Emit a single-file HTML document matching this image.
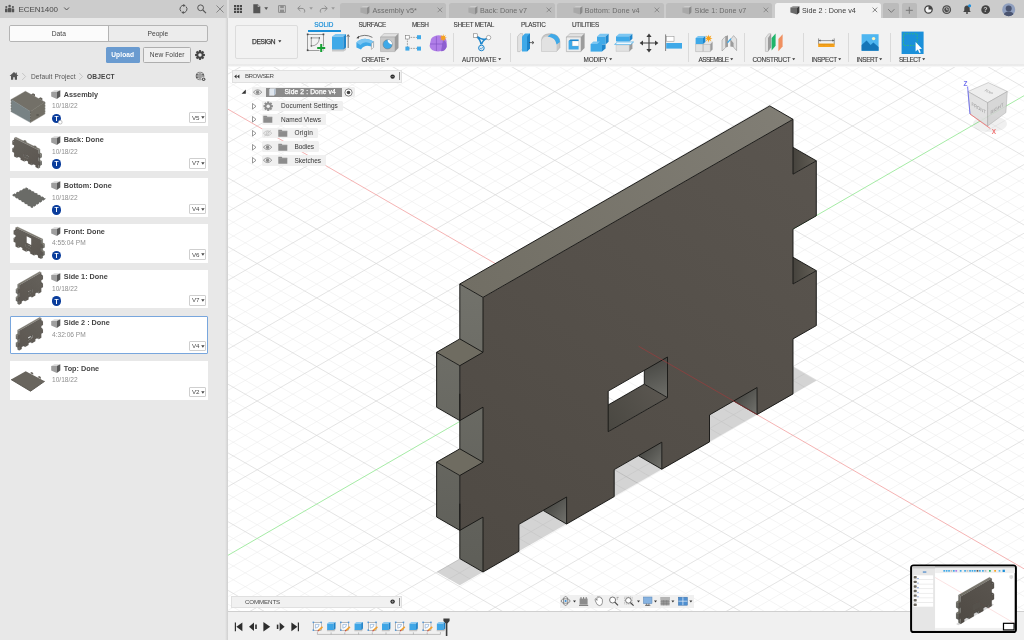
<!DOCTYPE html>
<html lang="en"><head><meta charset="utf-8"><title>Autodesk Fusion 360 - Side 2 : Done v4</title>
<style>
html,body{margin:0;padding:0;}
body{width:1024px;height:640px;overflow:hidden;position:relative;background:#fff;font-family:"Liberation Sans",sans-serif;}
.a{position:absolute;box-sizing:border-box;display:block;}
.t{position:absolute;white-space:nowrap;display:block;}
svg{overflow:visible;}
#app{position:absolute;left:0;top:0;width:1024px;height:640px;overflow:hidden;will-change:transform;}
</style></head><body><div id="app">
<svg class="a" style="left:0;top:0" width="1024" height="640" viewBox="0 0 1024 640"><defs><linearGradient id="gFront" gradientUnits="userSpaceOnUse" x1="480" y1="560" x2="800" y2="130"><stop offset="0" stop-color="#4f4a44"/><stop offset="1" stop-color="#5a554f"/></linearGradient><linearGradient id="gTop" gradientUnits="userSpaceOnUse" x1="460" y1="290" x2="790" y2="110"><stop offset="0" stop-color="#716e64"/><stop offset="1" stop-color="#817e75"/></linearGradient><linearGradient id="gEnd" gradientUnits="userSpaceOnUse" x1="0" y1="285" x2="0" y2="572"><stop offset="0" stop-color="#72726b"/><stop offset="1" stop-color="#5e5e58"/></linearGradient><linearGradient id="gWall" x1="0.45" y1="0.25" x2="0.95" y2="1"><stop offset="0" stop-color="#454541"/><stop offset="1" stop-color="#72726d"/></linearGradient><linearGradient id="gRTab" gradientUnits="userSpaceOnUse" x1="793" y1="0" x2="816" y2="0"><stop offset="0" stop-color="#46433d"/><stop offset="1" stop-color="#625e56"/></linearGradient><clipPath id="cv"><rect x="228" y="60" width="796" height="554"/></clipPath></defs><defs><linearGradient id="gHoleW" gradientUnits="userSpaceOnUse" x1="650" y1="362" x2="664" y2="396"><stop offset="0" stop-color="#484844"/><stop offset="1" stop-color="#6c6c67"/></linearGradient><linearGradient id="gHoleB" gradientUnits="userSpaceOnUse" x1="608" y1="425" x2="660" y2="392"><stop offset="0" stop-color="#4a4842"/><stop offset="1" stop-color="#5a5650"/></linearGradient></defs><g clip-path="url(#cv)"><rect x="228" y="60" width="796" height="554" fill="#fff"/><path d="M228.0 60.3L228.5 60.0M228.0 87.8L276.2 60.0M228.0 101.6L300.0 60.0M228.0 115.3L323.8 60.0M228.0 129.1L347.6 60.0M228.0 156.6L395.3 60.0M228.0 170.3L419.1 60.0M228.0 184.1L442.9 60.0M228.0 197.8L466.7 60.0M228.0 225.3L514.3 60.0M228.0 239.1L538.1 60.0M228.0 252.8L562.0 60.0M228.0 266.6L585.8 60.0M228.0 294.1L633.4 60.0M228.0 307.8L657.2 60.0M228.0 321.6L681.0 60.0M228.0 335.3L704.9 60.0M228.0 362.8L752.5 60.0M228.0 376.6L776.3 60.0M228.0 390.3L800.1 60.0M228.0 404.1L823.9 60.0M228.0 431.6L871.6 60.0M228.0 445.3L895.4 60.0M228.0 459.1L919.2 60.0M228.0 472.8L943.0 60.0M228.0 500.3L990.6 60.0M228.0 514.1L1014.5 60.0M228.0 527.8L1024.0 68.2M228.0 541.6L1024.0 82.0M228.0 569.1L1024.0 109.5M228.0 582.8L1024.0 123.2M228.0 596.6L1024.0 137.0M228.0 610.3L1024.0 150.7M269.2 614.0L1024.0 178.2M293.1 614.0L1024.0 192.0M316.9 614.0L1024.0 205.7M340.7 614.0L1024.0 219.5M388.3 614.0L1024.0 247.0M412.1 614.0L1024.0 260.7M436.0 614.0L1024.0 274.5M459.8 614.0L1024.0 288.2M507.4 614.0L1024.0 315.7M531.2 614.0L1024.0 329.5M555.0 614.0L1024.0 343.2M578.8 614.0L1024.0 357.0M626.5 614.0L1024.0 384.5M650.3 614.0L1024.0 398.2M674.1 614.0L1024.0 412.0M697.9 614.0L1024.0 425.7M745.6 614.0L1024.0 453.2M769.4 614.0L1024.0 467.0M793.2 614.0L1024.0 480.7M817.0 614.0L1024.0 494.5M864.6 614.0L1024.0 522.0M888.5 614.0L1024.0 535.7M912.3 614.0L1024.0 549.5M936.1 614.0L1024.0 563.2M983.7 614.0L1024.0 590.7M1007.5 614.0L1024.0 604.5M1024.0 60.0L1024.0 60.0M1000.2 60.0L1024.0 73.8M952.5 60.0L1024.0 101.3M928.7 60.0L1024.0 115.0M904.9 60.0L1024.0 128.8M881.1 60.0L1024.0 142.5M833.5 60.0L1024.0 170.0M809.6 60.0L1024.0 183.8M785.8 60.0L1024.0 197.5M762.0 60.0L1024.0 211.3M714.4 60.0L1024.0 238.8M690.6 60.0L1024.0 252.5M666.7 60.0L1024.0 266.3M642.9 60.0L1024.0 280.0M595.3 60.0L1024.0 307.5M571.5 60.0L1024.0 321.3M547.7 60.0L1024.0 335.0M523.9 60.0L1024.0 348.8M476.2 60.0L1024.0 376.3M452.4 60.0L1024.0 390.0M428.6 60.0L1024.0 403.8M404.8 60.0L1024.0 417.5M357.1 60.0L1024.0 445.0M333.3 60.0L1024.0 458.8M309.5 60.0L1024.0 472.5M285.7 60.0L1024.0 486.3M238.1 60.0L1024.0 513.8M228.0 67.9L1024.0 527.5M228.0 81.7L1024.0 541.3M228.0 95.4L1024.0 555.0M228.0 122.9L1024.0 582.5M228.0 136.7L1024.0 596.3M228.0 150.4L1024.0 610.0M228.0 164.2L1007.1 614.0M228.0 191.7L959.5 614.0M228.0 205.4L935.6 614.0M228.0 219.2L911.8 614.0M228.0 232.9L888.0 614.0M228.0 260.4L840.4 614.0M228.0 274.2L816.6 614.0M228.0 287.9L792.8 614.0M228.0 301.7L768.9 614.0M228.0 329.2L721.3 614.0M228.0 342.9L697.5 614.0M228.0 356.7L673.7 614.0M228.0 370.4L649.9 614.0M228.0 397.9L602.2 614.0M228.0 411.7L578.4 614.0M228.0 425.4L554.6 614.0M228.0 439.2L530.8 614.0M228.0 466.7L483.1 614.0M228.0 480.4L459.3 614.0M228.0 494.2L435.5 614.0M228.0 507.9L411.7 614.0M228.0 535.4L364.1 614.0M228.0 549.2L340.3 614.0M228.0 562.9L316.4 614.0M228.0 576.7L292.6 614.0M228.0 604.2L245.0 614.0" stroke="#ebebeb" stroke-width="0.55" fill="none"/><path d="M228.0 74.1L252.4 60.0M228.0 142.8L371.4 60.0M228.0 211.6L490.5 60.0M228.0 280.3L609.6 60.0M228.0 349.1L728.7 60.0M228.0 417.8L847.8 60.0M228.0 486.6L966.8 60.0M245.4 614.0L1024.0 164.5M364.5 614.0L1024.0 233.2M483.6 614.0L1024.0 302.0M602.7 614.0L1024.0 370.7M721.7 614.0L1024.0 439.5M840.8 614.0L1024.0 508.2M959.9 614.0L1024.0 577.0M976.3 60.0L1024.0 87.5M857.3 60.0L1024.0 156.3M738.2 60.0L1024.0 225.0M619.1 60.0L1024.0 293.8M500.0 60.0L1024.0 362.5M381.0 60.0L1024.0 431.3M261.9 60.0L1024.0 500.0M228.0 177.9L983.3 614.0M228.0 246.7L864.2 614.0M228.0 315.4L745.1 614.0M228.0 384.2L626.0 614.0M228.0 452.9L507.0 614.0M228.0 521.7L387.9 614.0M228.0 590.4L268.8 614.0" stroke="#d5d5d5" stroke-width="0.65" fill="none"/><path d="M228.0 555.3L1024.0 95.7" stroke="#8ee68e" stroke-width="0.8" fill="none"/><path d="M228.0 109.2L1024.0 568.8" stroke="#f2a0a0" stroke-width="0.8" fill="none"/><g id="model"><polygon points="436.6,571.9 793.0,367.1 816.3,380.5 459.8,585.3" fill="#000" fill-opacity="0.17"/><g id="body"><polygon points="644.3,384.2 667.5,397.6 667.5,357.0 644.3,343.6" fill="url(#gHoleW)"/><polygon points="584.9,418.3 644.3,384.2 667.5,397.6 608.2,431.7" fill="url(#gHoleB)"/><polygon points="459.8,284.0 769.8,105.9 793.0,119.3 483.0,297.4" fill="url(#gTop)"/><polygon points="459.8,558.6 483.0,572.0 483.0,297.4 459.8,284.0" fill="url(#gEnd)"/><polygon points="436.6,352.3 459.8,338.9 483.0,352.3 459.8,365.7" fill="#6f6c61"/><polygon points="436.6,407.2 459.8,420.6 459.8,365.7 436.6,352.3" fill="url(#gEnd)"/><polygon points="436.6,462.1 459.8,448.8 483.0,462.2 459.8,475.5" fill="#6f6c61"/><polygon points="436.6,517.0 459.8,530.4 459.8,475.5 436.6,462.1" fill="url(#gEnd)"/><polygon points="769.8,160.8 793.0,147.4 816.3,160.8 793.0,174.2" fill="url(#gRTab)"/><polygon points="769.8,270.6 793.0,257.3 816.3,270.7 793.0,284.0" fill="url(#gRTab)"/><polygon points="543.4,510.6 566.6,524.0 566.6,497.0 543.4,483.6" fill="url(#gWall)"/><polygon points="638.6,455.8 661.8,469.2 661.8,442.2 638.6,428.8" fill="url(#gWall)"/><polygon points="733.9,401.1 757.1,414.5 757.1,387.5 733.9,374.1" fill="url(#gWall)"/><path d="M483.0 297.4L793.0 119.3L793.0 174.2L816.3 160.8L816.3 215.8L793.0 229.1L793.0 284.0L816.3 270.7L816.3 325.6L793.0 338.9L793.0 393.9L757.1 414.5L757.1 387.5L709.5 414.9L709.5 441.9L661.8 469.2L661.8 442.2L614.2 469.6L614.2 496.6L566.6 524.0L566.6 497.0L518.9 524.3L518.9 551.3L483.0 572.0L483.0 517.1L459.8 530.4L459.8 475.5L483.0 462.2L483.0 407.2L459.8 420.6L459.8 365.7L483.0 352.3ZM608.2 431.7L608.2 391.1L667.5 357.0L667.5 397.6Z" fill="url(#gFront)" fill-rule="evenodd"/><path d="M483.0 297.4L793.0 119.3L793.0 174.2L816.3 160.8L816.3 215.8L793.0 229.1L793.0 284.0L816.3 270.7L816.3 325.6L793.0 338.9L793.0 393.9L757.1 414.5L757.1 387.5L709.5 414.9L709.5 441.9L661.8 469.2L661.8 442.2L614.2 469.6L614.2 496.6L566.6 524.0L566.6 497.0L518.9 524.3L518.9 551.3L483.0 572.0L483.0 517.1L459.8 530.4L459.8 475.5L483.0 462.2L483.0 407.2L459.8 420.6L459.8 365.7L483.0 352.3ZM608.2 431.7L608.2 391.1L667.5 357.0L667.5 397.6ZM483.0 297.4L459.8 284.0L769.8 105.9L793.0 119.3M459.8 284.0L459.8 338.9M459.8 393.8L459.8 448.8M459.8 503.7L459.8 558.6L483.0 572.0M483.0 352.3L459.8 338.9L436.6 352.3L459.8 365.7M436.6 352.3L436.6 407.2L459.8 420.6M459.8 393.8L459.8 393.8M483.0 462.2L459.8 448.8L436.6 462.1L459.8 475.5M436.6 462.1L436.6 517.0L459.8 530.4M459.8 503.7L459.8 503.7M793.0 147.4L793.0 147.4L816.3 160.8M793.0 257.2L793.0 257.3L816.3 270.7M543.4 510.6L566.6 524.0M638.6 455.8L661.8 469.2M733.9 401.1L757.1 414.5M608.2 405.0L644.3 384.2L667.5 397.6M644.3 384.2L644.3 370.3" stroke="#171715" stroke-width="0.95" fill="none" stroke-linejoin="round"/></g><path d="M638.6 346.25L757.1 414.5" stroke="#a8383a" stroke-width="0.7" fill="none" opacity="0.85"/></g></g></svg>
<div class="a" style="left:0px;top:0px;width:228px;height:640px;background:linear-gradient(90deg,#e8e8e8 0,#e8e8e8 225px,#cfcfcf 228px);"></div>
<div class="a" style="left:0px;top:0px;width:228px;height:18px;background:linear-gradient(90deg,#cccccc 0,#cccccc 226.6px,#dedede 227.2px,#dedede 228px);"></div>
<svg class="a" style="left:4px;top:4px" width="12" height="10" viewBox="0 0 12 10"><g fill="#555"><circle cx="2.3" cy="3" r="1.1"/><rect x="1" y="4.6" width="2.6" height="3.6" rx=".5"/><circle cx="5.6" cy="2" r="1.3"/><rect x="4" y="3.8" width="3.2" height="4.4" rx=".5"/><circle cx="8.9" cy="3" r="1.1"/><rect x="7.6" y="4.6" width="2.6" height="3.6" rx=".5"/></g></svg>
<span class="t " style="left:18.50px;top:5px;font-size:8px;line-height:9px;height:9px;color:#4a4a4a;letter-spacing:-0.066px;">ECEN1400</span>
<svg class="a" style="left:63px;top:6px" width="8" height="6" viewBox="0 0 8 6"><path d="M1.2 1.5L3.6 4L6 1.5" stroke="#555" stroke-width="1" fill="none"/></svg>
<svg class="a" style="left:178px;top:3px" width="12" height="12" viewBox="0 0 12 12"><g stroke="#555" stroke-width="1" fill="none"><path d="M3 8.4A3.6 3.6 0 0 1 6.4 2.4"/><path d="M8 3.6A3.6 3.6 0 0 1 4.6 9.6"/></g><path d="M5.2 0.9L7.7 2.5L5.4 4.1Z" fill="#555"/><path d="M5.8 11.1L3.3 9.5L5.6 7.9Z" fill="#555"/></svg>
<svg class="a" style="left:196px;top:3px" width="12" height="12" viewBox="0 0 12 12"><circle cx="4.6" cy="4.8" r="2.9" stroke="#555" stroke-width="1" fill="none"/><path d="M6.8 7L10 10.2" stroke="#555" stroke-width="1.1"/></svg>
<svg class="a" style="left:215px;top:4px" width="10" height="10" viewBox="0 0 10 10"><path d="M1.5 1.5L8.5 8.5M8.5 1.5L1.5 8.5" stroke="#666" stroke-width="0.7"/></svg>
<div class="a" style="left:9px;top:25px;width:199px;height:16.5px;border:1px solid #b4b4b4;border-radius:2px;background:#ececec;"></div>
<div class="a" style="left:10px;top:26px;width:98.5px;height:14.5px;background:#fbfbfb;border-right:1px solid #b4b4b4;border-radius:1px 0 0 1px;"></div>
<span class="t " style="left:51.72px;top:30px;font-size:6.7px;line-height:7px;height:7px;color:#444;">Data</span>
<span class="t " style="left:147.47px;top:30px;font-size:6.7px;line-height:7px;height:7px;color:#444;">People</span>
<div class="a" style="left:105.5px;top:47px;width:34.5px;height:15.5px;background:#6a9bd0;border-radius:1.5px;"></div>
<span class="t " style="left:111.20px;top:51px;font-size:6.6px;line-height:7px;height:7px;color:#fff;font-weight:bold;letter-spacing:0.106px;">Upload</span>
<div class="a" style="left:143px;top:47px;width:47.5px;height:15.5px;background:#efefef;border:1px solid #aeaeae;border-radius:1.5px;"></div>
<span class="t " style="left:149.80px;top:51px;font-size:6.6px;line-height:7px;height:7px;color:#444;letter-spacing:0.105px;">New Folder</span>
<svg class="a" style="left:194px;top:49px" width="12" height="12" viewBox="0 0 12 12"><g transform="translate(6,6)" fill="#444"><rect x="-1.08" y="-4.90" width="2.16" height="2.45" transform="rotate(0.0)"/><rect x="-1.08" y="-4.90" width="2.16" height="2.45" transform="rotate(45.0)"/><rect x="-1.08" y="-4.90" width="2.16" height="2.45" transform="rotate(90.0)"/><rect x="-1.08" y="-4.90" width="2.16" height="2.45" transform="rotate(135.0)"/><rect x="-1.08" y="-4.90" width="2.16" height="2.45" transform="rotate(180.0)"/><rect x="-1.08" y="-4.90" width="2.16" height="2.45" transform="rotate(225.0)"/><rect x="-1.08" y="-4.90" width="2.16" height="2.45" transform="rotate(270.0)"/><rect x="-1.08" y="-4.90" width="2.16" height="2.45" transform="rotate(315.0)"/><circle r="3.63"/><circle r="1.76" fill="#e8e8e8"/></g></svg>
<svg class="a" style="left:9px;top:71px" width="10" height="10" viewBox="0 0 10 10"><path d="M5 1L0.6 5H2V8.8H4.2V6.2H5.8V8.8H8V5H9.4Z" fill="#555"/><rect x="6.8" y="1.6" width="1" height="2" fill="#555"/></svg>
<svg class="a" style="left:21px;top:72px" width="6" height="9" viewBox="0 0 6 9"><path d="M1.2 1L4.6 4.5L1.2 8" stroke="#bdbdbd" stroke-width="0.8" fill="none"/></svg>
<span class="t " style="left:31.00px;top:73px;font-size:6.6px;line-height:7px;height:7px;color:#555;letter-spacing:0.087px;">Default Project</span>
<svg class="a" style="left:78px;top:72px" width="6" height="9" viewBox="0 0 6 9"><path d="M1.2 1L4.6 4.5L1.2 8" stroke="#bdbdbd" stroke-width="0.8" fill="none"/></svg>
<span class="t " style="left:87.00px;top:73px;font-size:6.6px;line-height:7px;height:7px;color:#444;font-weight:bold;letter-spacing:0.171px;">OBJECT</span>
<svg class="a" style="left:194.5px;top:71px" width="12" height="11" viewBox="0 0 12 11"><circle cx="5" cy="5" r="4.3" fill="#555"/><path d="M0.7 5H9.3M5 0.7V9.3M2 2.2Q5 4 8 2.2M2 7.8Q5 6 8 7.8" stroke="#e8e8e8" stroke-width="0.6" fill="none"/><ellipse cx="5" cy="5" rx="2" ry="4.3" stroke="#e8e8e8" stroke-width="0.6" fill="none"/><circle cx="8.6" cy="8.2" r="2.4" fill="#e8e8e8"/><circle cx="8.6" cy="8.2" r="1.8" fill="#555"/><circle cx="8.6" cy="8.2" r="0.7" fill="#e8e8e8"/></svg>
<div class="a" style="left:10px;top:87.0px;width:198.2px;height:38.6px;background:#fff;"></div>
<svg class="a" style="left:0;top:0.00px;opacity:0.93" width="60" height="400" viewBox="0 0 60 400"><polygon points="11.2,99.4 25.4,91.3 44.8,102 30.5,111.4" fill="#69665d" stroke="#69665d" stroke-width="0.4"/><polygon points="11.2,99.4 30.5,111.4 30.5,122.6 11.2,111.8" fill="#6e797b" stroke="#6e797b" stroke-width="0.4"/><polygon points="30.5,111.4 44.8,102 44.8,114 30.5,122.6" fill="#68655b" stroke="#68655b" stroke-width="0.4"/><polygon points="31,94.4 33,93.2 35,94.2 35,96.4" fill="#5d5a52"/><polygon points="38.5,98.4 40.4,97.3 42.4,98.3 42.4,100.5" fill="#5d5a52"/><path d="M30.5 111.4V122.6" stroke="#4e4b44" stroke-width="0.7" stroke-dasharray="1.6 1.2"/><path d="M11.2 99.6V111.6M44.8 102.2V113.8" stroke="#55524a" stroke-width="0.7" stroke-dasharray="1.6 1.2"/><rect x="36.4" y="114.2" width="2.4" height="1.6" fill="#4e4b44"/></svg>
<svg class="a" style="left:51.1px;top:89.9px" width="10" height="10" viewBox="0 0 10 10"><path d="M0.2 1.9L3.4 0.2H9.3L5.8 2.1Z" fill="#d8d8d8"/><path d="M0.2 1.9L5.8 2.1V8.9L0.2 6.6Z" fill="#9e9e9e"/><path d="M5.8 2.1L9.3 0.2V6.4L5.8 8.9Z" fill="#585858"/></svg>
<span class="t " style="left:63.80px;top:90px;font-size:7.25px;line-height:9px;height:9px;color:#444;font-weight:bold;">Assembly</span>
<span class="t " style="left:52.00px;top:102px;font-size:6.6px;line-height:7px;height:7px;color:#8f8f8f;">10/18/22</span>
<div class="a" style="left:51.6px;top:113.5px;width:9.6px;height:9.6px;background:#0a3d9c;border-radius:50%;"></div>
<span class="t " style="left:54.38px;top:115px;font-size:6.6px;line-height:7px;height:7px;color:#fff;font-weight:bold;">T</span>
<div class="a" style="left:189.3px;top:112.2px;width:16.3px;height:10.6px;background:#fff;border:1px solid #cfcfcf;border-radius:1px;"></div>
<span class="t " style="left:192.00px;top:114px;font-size:6.2px;line-height:7px;height:7px;color:#4a4a4a;letter-spacing:-0.092px;">V5</span>
<svg class="a" style="left:200.6px;top:116.2px" width="4" height="3" viewBox="0 0 4 3"><path d="M0.2 0.3H3.6L1.9 2.7Z" fill="#444"/></svg>
<div class="a" style="left:10px;top:132.72px;width:198.2px;height:38.6px;background:#fff;"></div>
<svg class="a" style="left:0;top:0.02px;opacity:0.93" width="60" height="400" viewBox="0 0 60 400"><g transform="translate(27.10,153.20) scale(-0.078,0.0675) translate(-626.4,-345.6)"><use href="#body"/><polygon points="606,392 669,355 669,399 606,434" fill="#55514b"/></g><polygon points="22.6,141.2 24.8,140 26.4,140.9 26.4,143.3" fill="#66635b"/><polygon points="32.6,146.6 34.8,145.4 36.4,146.3 36.4,148.7" fill="#66635b"/></svg>
<svg class="a" style="left:51.1px;top:135.62px" width="10" height="10" viewBox="0 0 10 10"><path d="M0.2 1.9L3.4 0.2H9.3L5.8 2.1Z" fill="#d8d8d8"/><path d="M0.2 1.9L5.8 2.1V8.9L0.2 6.6Z" fill="#9e9e9e"/><path d="M5.8 2.1L9.3 0.2V6.4L5.8 8.9Z" fill="#585858"/></svg>
<span class="t " style="left:63.80px;top:135px;font-size:7.25px;line-height:9px;height:9px;color:#444;font-weight:bold;">Back: Done</span>
<span class="t " style="left:52.00px;top:148px;font-size:6.6px;line-height:7px;height:7px;color:#8f8f8f;">10/18/22</span>
<div class="a" style="left:51.6px;top:159.22px;width:9.6px;height:9.6px;background:#0a3d9c;border-radius:50%;"></div>
<span class="t " style="left:54.38px;top:160px;font-size:6.6px;line-height:7px;height:7px;color:#fff;font-weight:bold;">T</span>
<div class="a" style="left:189.3px;top:157.92px;width:16.3px;height:10.6px;background:#fff;border:1px solid #cfcfcf;border-radius:1px;"></div>
<span class="t " style="left:192.00px;top:159px;font-size:6.2px;line-height:7px;height:7px;color:#4a4a4a;letter-spacing:-0.092px;">V7</span>
<svg class="a" style="left:200.6px;top:161.92px" width="4" height="3" viewBox="0 0 4 3"><path d="M0.2 0.3H3.6L1.9 2.7Z" fill="#444"/></svg>
<div class="a" style="left:10px;top:178.44px;width:198.2px;height:38.6px;background:#fff;"></div>
<svg class="a" style="left:0;top:0.04px;opacity:0.93" width="60" height="400" viewBox="0 0 60 400"><polygon points="13.2,195.2 26,188.2 44.7,198.7 32,207.2" fill="#5f605c" stroke="#5f605c" stroke-width="1.6" stroke-linejoin="round" stroke-dasharray="2.4 1.2"/><polygon points="13.2,195.2 26,188.2 44.7,198.7 32,207.2" fill="#5f605c"/></svg>
<svg class="a" style="left:51.1px;top:181.34px" width="10" height="10" viewBox="0 0 10 10"><path d="M0.2 1.9L3.4 0.2H9.3L5.8 2.1Z" fill="#d8d8d8"/><path d="M0.2 1.9L5.8 2.1V8.9L0.2 6.6Z" fill="#9e9e9e"/><path d="M5.8 2.1L9.3 0.2V6.4L5.8 8.9Z" fill="#585858"/></svg>
<span class="t " style="left:63.80px;top:181px;font-size:7.25px;line-height:9px;height:9px;color:#444;font-weight:bold;">Bottom: Done</span>
<span class="t " style="left:52.00px;top:194px;font-size:6.6px;line-height:7px;height:7px;color:#8f8f8f;">10/18/22</span>
<div class="a" style="left:51.6px;top:204.94px;width:9.6px;height:9.6px;background:#0a3d9c;border-radius:50%;"></div>
<span class="t " style="left:54.38px;top:206px;font-size:6.6px;line-height:7px;height:7px;color:#fff;font-weight:bold;">T</span>
<div class="a" style="left:189.3px;top:203.64px;width:16.3px;height:10.6px;background:#fff;border:1px solid #cfcfcf;border-radius:1px;"></div>
<span class="t " style="left:192.00px;top:205px;font-size:6.2px;line-height:7px;height:7px;color:#4a4a4a;letter-spacing:-0.092px;">V4</span>
<svg class="a" style="left:200.6px;top:207.64px" width="4" height="3" viewBox="0 0 4 3"><path d="M0.2 0.3H3.6L1.9 2.7Z" fill="#444"/></svg>
<div class="a" style="left:10px;top:224.16px;width:198.2px;height:38.6px;background:#fff;"></div>
<svg class="a" style="left:0;top:0.06px;opacity:0.93" width="60" height="400" viewBox="0 0 60 400"><g transform="translate(29.20,243.20) scale(-0.082,0.069) translate(-626.4,-345.6)"><use href="#body"/><polygon points="606,392 669,355 669,399 606,434" fill="#55514b"/></g><polygon points="26.7,236.2 31.2,238.5 31.2,245 26.7,242.7" fill="#fff"/></svg>
<svg class="a" style="left:51.1px;top:227.06px" width="10" height="10" viewBox="0 0 10 10"><path d="M0.2 1.9L3.4 0.2H9.3L5.8 2.1Z" fill="#d8d8d8"/><path d="M0.2 1.9L5.8 2.1V8.9L0.2 6.6Z" fill="#9e9e9e"/><path d="M5.8 2.1L9.3 0.2V6.4L5.8 8.9Z" fill="#585858"/></svg>
<span class="t " style="left:63.80px;top:227px;font-size:7.25px;line-height:9px;height:9px;color:#444;font-weight:bold;">Front: Done</span>
<span class="t " style="left:52.00px;top:239px;font-size:6.6px;line-height:7px;height:7px;color:#8f8f8f;">4:55:04 PM</span>
<div class="a" style="left:51.6px;top:250.66px;width:9.6px;height:9.6px;background:#0a3d9c;border-radius:50%;"></div>
<span class="t " style="left:54.38px;top:252px;font-size:6.6px;line-height:7px;height:7px;color:#fff;font-weight:bold;">T</span>
<div class="a" style="left:189.3px;top:249.36px;width:16.3px;height:10.6px;background:#fff;border:1px solid #cfcfcf;border-radius:1px;"></div>
<span class="t " style="left:192.00px;top:251px;font-size:6.2px;line-height:7px;height:7px;color:#4a4a4a;letter-spacing:-0.092px;">V6</span>
<svg class="a" style="left:200.6px;top:253.36px" width="4" height="3" viewBox="0 0 4 3"><path d="M0.2 0.3H3.6L1.9 2.7Z" fill="#444"/></svg>
<div class="a" style="left:10px;top:269.88px;width:198.2px;height:38.6px;background:#fff;"></div>
<svg class="a" style="left:0;top:0.08px;opacity:0.93" width="60" height="400" viewBox="0 0 60 400"><g transform="translate(29.40,288.60) scale(0.0715,0.0715) translate(-626.4,-345.6)"><use href="#body"/><polygon points="606,392 669,355 669,399 606,434" fill="#55514b"/></g></svg>
<svg class="a" style="left:51.1px;top:272.78px" width="10" height="10" viewBox="0 0 10 10"><path d="M0.2 1.9L3.4 0.2H9.3L5.8 2.1Z" fill="#d8d8d8"/><path d="M0.2 1.9L5.8 2.1V8.9L0.2 6.6Z" fill="#9e9e9e"/><path d="M5.8 2.1L9.3 0.2V6.4L5.8 8.9Z" fill="#585858"/></svg>
<span class="t " style="left:63.80px;top:272px;font-size:7.25px;line-height:9px;height:9px;color:#444;font-weight:bold;">Side 1: Done</span>
<span class="t " style="left:52.00px;top:285px;font-size:6.6px;line-height:7px;height:7px;color:#8f8f8f;">10/18/22</span>
<div class="a" style="left:51.6px;top:296.38px;width:9.6px;height:9.6px;background:#0a3d9c;border-radius:50%;"></div>
<span class="t " style="left:54.38px;top:298px;font-size:6.6px;line-height:7px;height:7px;color:#fff;font-weight:bold;">T</span>
<div class="a" style="left:189.3px;top:295.08px;width:16.3px;height:10.6px;background:#fff;border:1px solid #cfcfcf;border-radius:1px;"></div>
<span class="t " style="left:192.00px;top:296px;font-size:6.2px;line-height:7px;height:7px;color:#4a4a4a;letter-spacing:-0.092px;">V7</span>
<svg class="a" style="left:200.6px;top:299.08px" width="4" height="3" viewBox="0 0 4 3"><path d="M0.2 0.3H3.6L1.9 2.7Z" fill="#444"/></svg>
<div class="a" style="left:10px;top:315.6px;width:198.2px;height:38.6px;background:#fff;border:1px solid #78a6dd;border-radius:1px;"></div>
<svg class="a" style="left:0;top:0.10px;opacity:0.93" width="60" height="400" viewBox="0 0 60 400"><g transform="translate(29.40,334.30) scale(0.0715,0.0715) translate(-626.4,-345.6)"><use href="#body"/></g></svg>
<svg class="a" style="left:51.1px;top:318.5px" width="10" height="10" viewBox="0 0 10 10"><path d="M0.2 1.9L3.4 0.2H9.3L5.8 2.1Z" fill="#d8d8d8"/><path d="M0.2 1.9L5.8 2.1V8.9L0.2 6.6Z" fill="#9e9e9e"/><path d="M5.8 2.1L9.3 0.2V6.4L5.8 8.9Z" fill="#585858"/></svg>
<span class="t " style="left:63.80px;top:318px;font-size:7.25px;line-height:9px;height:9px;color:#444;font-weight:bold;">Side 2 : Done</span>
<span class="t " style="left:52.00px;top:331px;font-size:6.6px;line-height:7px;height:7px;color:#8f8f8f;">4:32:06 PM</span>
<div class="a" style="left:189.3px;top:340.8px;width:16.3px;height:10.6px;background:#fff;border:1px solid #cfcfcf;border-radius:1px;"></div>
<span class="t " style="left:192.00px;top:342px;font-size:6.2px;line-height:7px;height:7px;color:#4a4a4a;letter-spacing:-0.092px;">V4</span>
<svg class="a" style="left:200.6px;top:344.8px" width="4" height="3" viewBox="0 0 4 3"><path d="M0.2 0.3H3.6L1.9 2.7Z" fill="#444"/></svg>
<div class="a" style="left:10px;top:361.32px;width:198.2px;height:38.6px;background:#fff;"></div>
<svg class="a" style="left:0;top:0.12px;opacity:0.93" width="60" height="400" viewBox="0 0 60 400"><polygon points="11,379.5 25.7,371.2 44.7,381.3 30.5,391.2" fill="#5e5a52"/><polygon points="30,372.9 31.6,372 33.2,372.9 33.2,374.8" fill="#5e5a52"/><polygon points="37.6,377 39.2,376.1 40.8,377 40.8,378.9" fill="#5e5a52"/><path d="M11 379.5L30.5 391.2L44.7 381.3" stroke="#4a463f" stroke-width="0.9" fill="none"/></svg>
<svg class="a" style="left:51.1px;top:364.21999999999997px" width="10" height="10" viewBox="0 0 10 10"><path d="M0.2 1.9L3.4 0.2H9.3L5.8 2.1Z" fill="#d8d8d8"/><path d="M0.2 1.9L5.8 2.1V8.9L0.2 6.6Z" fill="#9e9e9e"/><path d="M5.8 2.1L9.3 0.2V6.4L5.8 8.9Z" fill="#585858"/></svg>
<span class="t " style="left:63.80px;top:364px;font-size:7.25px;line-height:9px;height:9px;color:#444;font-weight:bold;">Top: Done</span>
<span class="t " style="left:52.00px;top:376px;font-size:6.6px;line-height:7px;height:7px;color:#8f8f8f;">10/18/22</span>
<div class="a" style="left:189.3px;top:386.52px;width:16.3px;height:10.6px;background:#fff;border:1px solid #cfcfcf;border-radius:1px;"></div>
<span class="t " style="left:192.00px;top:388px;font-size:6.2px;line-height:7px;height:7px;color:#4a4a4a;letter-spacing:-0.092px;">V2</span>
<svg class="a" style="left:200.6px;top:390.52px" width="4" height="3" viewBox="0 0 4 3"><path d="M0.2 0.3H3.6L1.9 2.7Z" fill="#444"/></svg>
<svg class="a" style="left:58px;top:119.5px" width="5" height="5" viewBox="0 0 5 5"><circle cx="2.2" cy="2.2" r="1.9" fill="#fff" stroke="#888" stroke-width="0.5"/></svg>
<div class="a" style="left:228px;top:0px;width:796px;height:18px;background:linear-gradient(90deg,#dedede 0,#dedede 0.9px,#cccccc 1.2px);"></div>
<div class="a" style="left:228px;top:18px;width:796px;height:48.5px;background:linear-gradient(180deg,#f2f2f2 0,#f2f2f2 45.6px,#eaeaea 46.4px,#ececec 48px,#f6f6f6 48.5px);"></div>
<svg class="a" style="left:233.8px;top:5px" width="9" height="9" viewBox="0 0 9 9"><rect x="0.0" y="0.0" width="2.2" height="2.2" fill="#484848"/><rect x="2.9" y="0.0" width="2.2" height="2.2" fill="#484848"/><rect x="5.8" y="0.0" width="2.2" height="2.2" fill="#484848"/><rect x="0.0" y="2.9" width="2.2" height="2.2" fill="#484848"/><rect x="2.9" y="2.9" width="2.2" height="2.2" fill="#484848"/><rect x="5.8" y="2.9" width="2.2" height="2.2" fill="#484848"/><rect x="0.0" y="5.8" width="2.2" height="2.2" fill="#484848"/><rect x="2.9" y="5.8" width="2.2" height="2.2" fill="#484848"/><rect x="5.8" y="5.8" width="2.2" height="2.2" fill="#484848"/></svg>
<svg class="a" style="left:253px;top:4.4px" width="8" height="10" viewBox="0 0 8 10"><path d="M0.3 0.3H4.6L7.3 3V9.3H0.3Z" fill="#555"/><path d="M4.6 0.3V3H7.3Z" fill="#cbcbcb" stroke="#555" stroke-width="0.4"/></svg>
<svg class="a" style="left:263.6px;top:7.2px" width="5" height="4" viewBox="0 0 5 4"><path d="M0.3 0.3H4.1L2.2 2.9Z" fill="#555"/></svg>
<svg class="a" style="left:278px;top:5px" width="9" height="9" viewBox="0 0 9 9"><path d="M0.6 0.6H7.4V7.4H0.6Z" fill="none" stroke="#8d8d8d" stroke-width="1"/><rect x="2.2" y="0.6" width="3.6" height="2.6" fill="#8d8d8d"/><rect x="2" y="4.6" width="4" height="2.8" fill="#8d8d8d"/></svg>
<svg class="a" style="left:297px;top:4.5px" width="9" height="9" viewBox="0 0 9 9"><path d="M1 3.4H5A2.6 2.6 0 0 1 7.2 7.6" stroke="#8d8d8d" stroke-width="1" fill="none"/><path d="M3.4 0.8L0.7 3.4L3.4 6" stroke="#8d8d8d" stroke-width="1" fill="none"/></svg>
<svg class="a" style="left:308.8px;top:7.2px" width="5" height="4" viewBox="0 0 5 4"><path d="M0.3 0.3H3.9L2.1 2.7Z" fill="#9a9a9a"/></svg>
<svg class="a" style="left:319px;top:4.5px" width="9" height="9" viewBox="0 0 9 9"><path d="M8 3.4H4A2.6 2.6 0 0 0 1.8 7.6" stroke="#8d8d8d" stroke-width="1" fill="none"/><path d="M5.6 0.8L8.3 3.4L5.6 6" stroke="#8d8d8d" stroke-width="1" fill="none"/></svg>
<svg class="a" style="left:331px;top:7.2px" width="5" height="4" viewBox="0 0 5 4"><path d="M0.3 0.3H3.9L2.1 2.7Z" fill="#9a9a9a"/></svg>
<div class="a" style="left:339.8px;top:2.5px;width:106.19999999999999px;height:15.5px;background:#bdbdbd;border-radius:2.5px 2.5px 0 0;"></div>
<svg class="a" style="left:360px;top:5.9px" width="10" height="10" viewBox="0 0 10 10"><path d="M0.4 1.6L3 0.3H9.4L7 1.8Z" fill="#d2d2d2"/><path d="M0.4 1.6H7V8.6L0.4 6.6Z" fill="#a9a9a9"/><path d="M7 1.8L9.4 0.3V6.4L7 8.6Z" fill="#8b8b8b"/></svg>
<span class="t " style="left:372.50px;top:6px;font-size:7.2px;line-height:9px;height:9px;color:#6c6c6c;letter-spacing:0.074px;">Assembly v5*</span>
<svg class="a" style="left:437px;top:7.2px" width="6" height="6" viewBox="0 0 6 6"><path d="M0.6 0.6L5.2 5.2M5.2 0.6L0.6 5.2" stroke="#777" stroke-width="0.7"/></svg>
<div class="a" style="left:448.6px;top:2.5px;width:106.39999999999998px;height:15.5px;background:#bdbdbd;border-radius:2.5px 2.5px 0 0;"></div>
<svg class="a" style="left:468px;top:5.9px" width="10" height="10" viewBox="0 0 10 10"><path d="M0.4 1.6L3 0.3H9.4L7 1.8Z" fill="#d2d2d2"/><path d="M0.4 1.6H7V8.6L0.4 6.6Z" fill="#a9a9a9"/><path d="M7 1.8L9.4 0.3V6.4L7 8.6Z" fill="#8b8b8b"/></svg>
<span class="t " style="left:480.00px;top:6px;font-size:7.2px;line-height:9px;height:9px;color:#6c6c6c;letter-spacing:0.013px;">Back: Done v7</span>
<svg class="a" style="left:545.5px;top:7.2px" width="6" height="6" viewBox="0 0 6 6"><path d="M0.6 0.6L5.2 5.2M5.2 0.6L0.6 5.2" stroke="#777" stroke-width="0.7"/></svg>
<div class="a" style="left:557.2px;top:2.5px;width:106.5px;height:15.5px;background:#bdbdbd;border-radius:2.5px 2.5px 0 0;"></div>
<svg class="a" style="left:573px;top:5.9px" width="10" height="10" viewBox="0 0 10 10"><path d="M0.4 1.6L3 0.3H9.4L7 1.8Z" fill="#d2d2d2"/><path d="M0.4 1.6H7V8.6L0.4 6.6Z" fill="#a9a9a9"/><path d="M7 1.8L9.4 0.3V6.4L7 8.6Z" fill="#8b8b8b"/></svg>
<span class="t " style="left:584.70px;top:6px;font-size:7.2px;line-height:9px;height:9px;color:#6c6c6c;letter-spacing:0.098px;">Bottom: Done v4</span>
<svg class="a" style="left:654.3px;top:7.2px" width="6" height="6" viewBox="0 0 6 6"><path d="M0.6 0.6L5.2 5.2M5.2 0.6L0.6 5.2" stroke="#777" stroke-width="0.7"/></svg>
<div class="a" style="left:666px;top:2.5px;width:106px;height:15.5px;background:#bdbdbd;border-radius:2.5px 2.5px 0 0;"></div>
<svg class="a" style="left:682.4px;top:5.9px" width="10" height="10" viewBox="0 0 10 10"><path d="M0.4 1.6L3 0.3H9.4L7 1.8Z" fill="#d2d2d2"/><path d="M0.4 1.6H7V8.6L0.4 6.6Z" fill="#a9a9a9"/><path d="M7 1.8L9.4 0.3V6.4L7 8.6Z" fill="#8b8b8b"/></svg>
<span class="t " style="left:694.60px;top:6px;font-size:7.2px;line-height:9px;height:9px;color:#6c6c6c;letter-spacing:0.038px;">Side 1: Done v7</span>
<svg class="a" style="left:762.8px;top:7.2px" width="6" height="6" viewBox="0 0 6 6"><path d="M0.6 0.6L5.2 5.2M5.2 0.6L0.6 5.2" stroke="#777" stroke-width="0.7"/></svg>
<div class="a" style="left:774.5px;top:2.5px;width:106px;height:16px;background:#f2f2f2;border-radius:2.5px 2.5px 0 0;"></div>
<svg class="a" style="left:790px;top:5.9px" width="10" height="10" viewBox="0 0 10 10"><path d="M0.4 1.6L3 0.3H9.4L7 1.8Z" fill="#8a8a8a"/><path d="M0.4 1.6H7V8.6L0.4 6.6Z" fill="#6a6a6a"/><path d="M7 1.8L9.4 0.3V6.4L7 8.6Z" fill="#3c3c3c"/></svg>
<span class="t " style="left:802.00px;top:6px;font-size:7.2px;line-height:9px;height:9px;color:#3a3a3a;letter-spacing:0.048px;">Side 2 : Done v4</span>
<svg class="a" style="left:872px;top:7.2px" width="6" height="6" viewBox="0 0 6 6"><path d="M0.6 0.6L5.2 5.2M5.2 0.6L0.6 5.2" stroke="#555" stroke-width="0.7"/></svg>
<div class="a" style="left:883px;top:2.5px;width:15.5px;height:15.5px;background:#bbbbbb;border-radius:2px 2px 0 0;"></div>
<svg class="a" style="left:886.5px;top:7.5px" width="9" height="6" viewBox="0 0 9 6"><path d="M1.2 1.2L4.3 4.4L7.4 1.2" stroke="#777" stroke-width="1" fill="none"/></svg>
<div class="a" style="left:901.5px;top:2.5px;width:15.5px;height:15.5px;background:#bbbbbb;border-radius:2px 2px 0 0;"></div>
<svg class="a" style="left:905px;top:6px" width="9" height="9" viewBox="0 0 9 9"><path d="M4.3 0.8V7.8M0.8 4.3H7.8" stroke="#777" stroke-width="1"/></svg>
<svg class="a" style="left:923.8px;top:4.6px" width="9" height="9" viewBox="0 0 9 9"><circle cx="4.5" cy="4.5" r="3.7" fill="#f4f4f4" stroke="#444" stroke-width="1.3"/><path d="M4.5 4.5V0.8A3.7 3.7 0 0 1 8.2 4.5Z" fill="#444"/></svg>
<svg class="a" style="left:942.4px;top:4.5px" width="10" height="10" viewBox="0 0 10 10"><circle cx="4.7" cy="4.7" r="4.4" fill="#4a4a4a"/><circle cx="4.7" cy="4.7" r="2.9" fill="none" stroke="#cbcbcb" stroke-width="0.8"/><path d="M4.7 2.8V4.8H6.5" stroke="#cbcbcb" stroke-width="0.8" fill="none"/></svg>
<svg class="a" style="left:961.6px;top:4px" width="10" height="11" viewBox="0 0 10 11"><path d="M5 1.6C3.2 1.6 2.3 3 2.3 4.6V6.6L1.2 8H8.8L7.7 6.6V4.6C7.7 3 6.8 1.6 5 1.6Z" fill="#444"/><circle cx="5" cy="9" r="1" fill="#444"/><circle cx="7.6" cy="1.8" r="1.5" fill="#1b8fe0"/></svg>
<svg class="a" style="left:980.8px;top:4.5px" width="10" height="10" viewBox="0 0 10 10"><circle cx="4.7" cy="4.7" r="4.4" fill="#444"/></svg>
<span class="t " style="left:983.36px;top:6px;font-size:7px;line-height:7px;height:7px;color:#cbcbcb;font-weight:bold;">?</span>
<svg class="a" style="left:1002px;top:2.5px" width="14" height="14" viewBox="0 0 14 14"><defs><clipPath id="avc"><circle cx="6.7" cy="6.7" r="6.5"/></clipPath></defs><circle cx="6.7" cy="6.7" r="6.5" fill="#8f9fbf"/><g clip-path="url(#avc)" fill="#4a5470"><circle cx="6.7" cy="5.4" r="3"/><ellipse cx="6.7" cy="13" rx="5.4" ry="4.6"/></g></svg>
<div class="a" style="left:235.3px;top:24.5px;width:63px;height:34px;border:1px solid #dcdcdc;border-radius:2px;background:#f2f2f2;"></div>
<span class="t " style="left:252.00px;top:38px;font-size:6.6px;line-height:7px;height:7px;color:#3a3a3a;letter-spacing:-0.334px;-webkit-text-stroke:0.25px #3a3a3a;">DESIGN</span>
<svg class="a" style="left:278.4px;top:40.4px" width="4" height="3" viewBox="0 0 4 3"><path d="M0.2 0.2H3.4L1.8 2.4Z" fill="#333"/></svg>
<span class="t " style="left:314.30px;top:21px;font-size:6.4px;line-height:7px;height:7px;color:#1a8fd8;letter-spacing:-0.001px;-webkit-text-stroke:0.2px #1a8fd8;">SOLID</span>
<div class="a" style="left:308px;top:29.8px;width:33px;height:1.8px;background:#1a8fd8;"></div>
<span class="t " style="left:358.50px;top:21px;font-size:6.4px;line-height:7px;height:7px;color:#3c3c3c;letter-spacing:-0.390px;-webkit-text-stroke:0.12px #3c3c3c;">SURFACE</span>
<span class="t " style="left:412.00px;top:21px;font-size:6.4px;line-height:7px;height:7px;color:#3c3c3c;letter-spacing:-0.498px;-webkit-text-stroke:0.12px #3c3c3c;">MESH</span>
<span class="t " style="left:453.50px;top:21px;font-size:6.4px;line-height:7px;height:7px;color:#3c3c3c;letter-spacing:-0.306px;-webkit-text-stroke:0.12px #3c3c3c;">SHEET METAL</span>
<span class="t " style="left:521.00px;top:21px;font-size:6.4px;line-height:7px;height:7px;color:#3c3c3c;letter-spacing:-0.311px;-webkit-text-stroke:0.12px #3c3c3c;">PLASTIC</span>
<span class="t " style="left:572.00px;top:21px;font-size:6.4px;line-height:7px;height:7px;color:#3c3c3c;letter-spacing:-0.319px;-webkit-text-stroke:0.12px #3c3c3c;">UTILITIES</span>
<span class="t " style="left:361.50px;top:56px;font-size:6.4px;line-height:7px;height:7px;color:#3c3c3c;letter-spacing:-0.331px;-webkit-text-stroke:0.12px #3c3c3c;">CREATE</span>
<svg class="a" style="left:386.2px;top:58.4px" width="4" height="3" viewBox="0 0 4 3"><path d="M0.2 0.2H3.2L1.7 2.3Z" fill="#333"/></svg>
<span class="t " style="left:462.00px;top:56px;font-size:6.4px;line-height:7px;height:7px;color:#3c3c3c;letter-spacing:-0.058px;-webkit-text-stroke:0.12px #3c3c3c;">AUTOMATE</span>
<svg class="a" style="left:497.7px;top:58.4px" width="4" height="3" viewBox="0 0 4 3"><path d="M0.2 0.2H3.2L1.7 2.3Z" fill="#333"/></svg>
<span class="t " style="left:583.50px;top:56px;font-size:6.4px;line-height:7px;height:7px;color:#3c3c3c;letter-spacing:-0.148px;-webkit-text-stroke:0.12px #3c3c3c;">MODIFY</span>
<svg class="a" style="left:608.7px;top:58.4px" width="4" height="3" viewBox="0 0 4 3"><path d="M0.2 0.2H3.2L1.7 2.3Z" fill="#333"/></svg>
<span class="t " style="left:698.50px;top:56px;font-size:6.4px;line-height:7px;height:7px;color:#3c3c3c;letter-spacing:-0.563px;-webkit-text-stroke:0.12px #3c3c3c;">ASSEMBLE</span>
<svg class="a" style="left:729.7px;top:58.4px" width="4" height="3" viewBox="0 0 4 3"><path d="M0.2 0.2H3.2L1.7 2.3Z" fill="#333"/></svg>
<span class="t " style="left:752.50px;top:56px;font-size:6.4px;line-height:7px;height:7px;color:#3c3c3c;letter-spacing:-0.242px;-webkit-text-stroke:0.12px #3c3c3c;">CONSTRUCT</span>
<svg class="a" style="left:791.7px;top:58.4px" width="4" height="3" viewBox="0 0 4 3"><path d="M0.2 0.2H3.2L1.7 2.3Z" fill="#333"/></svg>
<span class="t " style="left:811.50px;top:56px;font-size:6.4px;line-height:7px;height:7px;color:#3c3c3c;letter-spacing:-0.348px;-webkit-text-stroke:0.12px #3c3c3c;">INSPECT</span>
<svg class="a" style="left:838.0px;top:58.4px" width="4" height="3" viewBox="0 0 4 3"><path d="M0.2 0.2H3.2L1.7 2.3Z" fill="#333"/></svg>
<span class="t " style="left:856.50px;top:56px;font-size:6.4px;line-height:7px;height:7px;color:#3c3c3c;letter-spacing:-0.342px;-webkit-text-stroke:0.12px #3c3c3c;">INSERT</span>
<svg class="a" style="left:879.0px;top:58.4px" width="4" height="3" viewBox="0 0 4 3"><path d="M0.2 0.2H3.2L1.7 2.3Z" fill="#333"/></svg>
<span class="t " style="left:899.00px;top:56px;font-size:6.4px;line-height:7px;height:7px;color:#3c3c3c;letter-spacing:-0.550px;-webkit-text-stroke:0.12px #3c3c3c;">SELECT</span>
<svg class="a" style="left:921.8000000000001px;top:58.4px" width="4" height="3" viewBox="0 0 4 3"><path d="M0.2 0.2H3.2L1.7 2.3Z" fill="#333"/></svg>
<div class="a" style="left:453.1px;top:33px;width:0.8px;height:29px;background:#dadada;"></div>
<div class="a" style="left:510.1px;top:33px;width:0.8px;height:29px;background:#dadada;"></div>
<div class="a" style="left:688.1px;top:33px;width:0.8px;height:29px;background:#dadada;"></div>
<div class="a" style="left:743.6px;top:33px;width:0.8px;height:29px;background:#dadada;"></div>
<div class="a" style="left:803.1px;top:33px;width:0.8px;height:29px;background:#dadada;"></div>
<div class="a" style="left:848.1px;top:33px;width:0.8px;height:29px;background:#dadada;"></div>
<div class="a" style="left:890.1px;top:33px;width:0.8px;height:29px;background:#dadada;"></div>
<svg class="a" style="left:0;top:0" width="1024" height="70" viewBox="0 0 1024 70"><g stroke="#5a5a5a" stroke-width="0.55" fill="none"><rect x="307.6" y="34.3" width="15.8" height="16"/><path d="M311.3 37.9H319.4Q319 45.6 311.3 46Z"/></g><g fill="#4a4a4a"><rect x="306.8" y="33.5" width="1.7" height="1.7"/><rect x="322.6" y="33.5" width="1.7" height="1.7"/><rect x="306.8" y="49.4" width="1.7" height="1.7"/><rect x="310.7" y="37.3" width="1.2" height="1.2"/><rect x="318.8" y="37.3" width="1.2" height="1.2"/><rect x="310.7" y="45.4" width="1.2" height="1.2"/></g><path d="M321.2 43.8V52M317.1 47.9H325.3" stroke="#f2f2f2" stroke-width="3.4"/><path d="M321.2 43.9V51.9M317.2 47.9H325.2" stroke="#17a035" stroke-width="2"/><path d="M332 49.5L335 47.8H346L346 50L343.5 51.6H332Z" fill="#c8c8c8"/><path d="M332 36.6L335.5 34H346L343.4 36.6Z" fill="#7cc6f2"/><path d="M332 36.6H343.4V49.4H332Z" fill="#3fa9e8"/><path d="M343.4 36.6L346 34V47.6L343.4 49.4Z" fill="#1e86cc"/><path d="M348.2 48V35.2M346.9 36.8L348.2 34.6L349.5 36.8" stroke="#444" stroke-width="0.7" fill="none"/><path d="M356.4 42.4Q364 35.6 373.6 41.6V47.4Q365 43.4 361 49.6L356.4 47.4Z" fill="#3fa9e8"/><path d="M356.4 42.4Q364 35.6 373.6 41.6L371.4 43.8Q364.4 40.2 360.4 45Z" fill="#7cc6f2"/><path d="M371.4 43.8L373.6 41.6V47.4L371.4 49.4Z" fill="#f4f4f4" stroke="#888" stroke-width="0.5"/><path d="M357.2 37.6Q364.6 33.2 372.4 37.4" stroke="#444" stroke-width="0.7" fill="none"/><path d="M356.4 38.2L358.8 35.8L359 38.4Z" fill="#444"/><path d="M380.5 37L384 33.6H398.5L395 37Z" fill="#e2e2e2" stroke="#999" stroke-width="0.4"/><path d="M380.5 37H395V51.6H380.5Z" fill="#c8c8c8" stroke="#999" stroke-width="0.4"/><path d="M395 37L398.5 33.6V48L395 51.6Z" fill="#9c9c9c"/><circle cx="387.6" cy="44.4" r="4.6" fill="#3fa9e8" stroke="#777" stroke-width="0.5"/><path d="M387.6 39.8A4.6 4.6 0 0 1 392.2 44.4A4.4 4.4 0 0 1 387.6 39.8Z" fill="#fff"/><path d="M408 37.4H418.6M408 48.4H418.6M407.4 38V47.8" stroke="#666" stroke-width="0.6" stroke-dasharray="1.6 1"/><rect x="405.6" y="35.4" width="3.6" height="3.6" fill="#fff" stroke="#666" stroke-width="0.5"/><rect x="417" y="35.2" width="4" height="4" fill="#3fa9e8"/><rect x="405.4" y="46.6" width="4" height="4" fill="#3fa9e8"/><rect x="417" y="46.6" width="4" height="4" fill="#3fa9e8"/><path d="M431 39Q434 35 440 35.4Q446 36 446.6 41V47Q445 51.4 438 51.4Q430.4 51.4 429.6 46Z" fill="#b07ee8"/><path d="M443 40Q447 41 446.6 47Q445 51.4 441 51.2Z" fill="#8e5fd0"/><path d="M436.4 36.4V51M430 44H443" stroke="#7d4fc0" stroke-width="0.6"/><polygon points="443.20,34.00 443.85,36.22 445.89,35.11 444.78,37.15 447.00,37.80 444.78,38.45 445.89,40.49 443.85,39.38 443.20,41.60 442.55,39.38 440.51,40.49 441.62,38.45 439.40,37.80 441.62,37.15 440.51,35.11 442.55,36.22" fill="#f7a21b"/><path d="M476.6 36.6Q480.6 39.6 481 44.4M487 38.6Q482.6 40 481.6 44.4M477.8 36.8Q482 40.6 486.4 38.8" stroke="#1e86cc" stroke-width="1.5" fill="none"/><circle cx="481.4" cy="48" r="2.8" fill="#dfe9f2" stroke="#1e86cc" stroke-width="1"/><path d="M480 48L481.2 49.2L482.8 47" stroke="#1e86cc" stroke-width="0.6" fill="none"/><rect x="473.6" y="33.8" width="3.6" height="3.6" fill="#fff" stroke="#666" stroke-width="0.5"/><circle cx="488.6" cy="37.6" r="2.2" fill="#fff" stroke="#666" stroke-width="0.5"/><path d="M517.6 36.6L520 33.6H522.6V48.8L520 51.6H517.6Z" fill="#e2e2e2" stroke="#999" stroke-width="0.4"/><path d="M522 36.4L525 33.6H530V48.6L527 51.4H522Z" fill="#3fa9e8"/><path d="M527 36.6L530 33.6V48.6L527 51.4Z" fill="#1e86cc"/><path d="M529 42.6H533.6M532 41.2L534 42.6L532 44" stroke="#333" stroke-width="0.7" fill="none"/><path d="M541.6 51.4V40Q542 34.4 548.6 33.8H552Q559.4 34.6 560 42V47.6L556.6 51.4Z" fill="#c8c8c8" stroke="#999" stroke-width="0.4"/><path d="M541.6 51.4V41Q542.4 36.6 547.4 36.4Q555.4 36.8 556.6 44V51.4Z" fill="#e2e2e2"/><path d="M547.6 36.4L551 33.8Q559 34.4 560 42L556.6 44.6Q555.8 37.4 547.6 36.4Z" fill="#3fa9e8"/><path d="M566.4 37L570 33.6H584.6L581 37Z" fill="#e2e2e2" stroke="#999" stroke-width="0.4"/><path d="M566.4 37H581V51.6H566.4Z" fill="#ececec" stroke="#999" stroke-width="0.5"/><path d="M581 37L584.6 33.6V48L581 51.6Z" fill="#9c9c9c"/><path d="M568.6 41H572.4V46H578.6V49.4H568.6Z" fill="#3fa9e8"/><path d="M572.4 41H578.6V46H572.4Z" fill="#fff" stroke="#aaa" stroke-width="0.3"/><path d="M568.6 41L570.4 39.6H578.6V41" fill="#1e86cc"/><path d="M597 36.6L600 33.8H608.6L605.6 36.6Z" fill="#7cc6f2"/><path d="M597 36.6H605.6V44.4H597Z" fill="#3fa9e8"/><path d="M605.6 36.6L608.6 33.8V41.8L605.6 44.4Z" fill="#1e86cc"/><path d="M590.6 44L593.4 41.4H600L597.2 44Z" fill="#7cc6f2"/><path d="M590.6 44H602V51.6H590.6Z" fill="#3fa9e8"/><path d="M602 44.4H605.6L602 48Z M602 44.4L605.6 44.4L605.6 48.4L602 51.6Z" fill="#1e86cc"/><path d="M616 36.4L619 33.8H632.4L629.4 36.4Z" fill="#7cc6f2"/><path d="M616 36.4H629.4V41.4H616Z" fill="#3fa9e8"/><path d="M629.4 36.4L632.4 33.8V38.8L629.4 41.4Z" fill="#1e86cc"/><path d="M616 45H629.4V51.4H616Z" fill="#e2e2e2" stroke="#aaa" stroke-width="0.3"/><path d="M629.4 45L632.4 42.6V48.6L629.4 51.4Z" fill="#9c9c9c"/><path d="M614.6 44.4L617.6 42H633.6L630.6 44.4Z" fill="#fff" stroke="#3fa9e8" stroke-width="0.7"/><path d="M649 35.4V50.6M641.4 43H656.6" stroke="#3c3c3c" stroke-width="1.1"/><g fill="#3c3c3c"><path d="M649 33.6L651.6 37H646.4Z"/><path d="M649 52.4L651.6 49H646.4Z"/><path d="M639.6 43L643 40.4V45.6Z"/><path d="M658.4 43L655 40.4V45.6Z"/></g><path d="M665.6 34.4V51" stroke="#555" stroke-width="0.7"/><rect x="666.4" y="36.4" width="7.6" height="4.8" fill="#fff" stroke="#888" stroke-width="0.5"/><rect x="666.2" y="43" width="15.8" height="5.6" fill="#3fa9e8"/><path d="M695.6 44H703V51.6H695.6Z" fill="#e2e2e2" stroke="#999" stroke-width="0.4"/><path d="M703.4 44H710.4V51.6H703.4Z" fill="#e2e2e2" stroke="#999" stroke-width="0.4"/><path d="M703.4 44L705.6 42H712.6L710.4 44Z" fill="#f4f4f4" stroke="#999" stroke-width="0.3"/><path d="M710.4 44L712.6 42V49.4L710.4 51.6Z" fill="#9c9c9c"/><path d="M695.6 38L698 36H705.4L703 38Z" fill="#7cc6f2"/><path d="M695.6 38H703V44H695.6Z" fill="#3fa9e8"/><path d="M703 38L705.4 36V42L703 44Z" fill="#1e86cc"/><polygon points="708.60,34.40 709.29,36.74 711.43,35.57 710.26,37.71 712.60,38.40 710.26,39.09 711.43,41.23 709.29,40.06 708.60,42.40 707.91,40.06 705.77,41.23 706.94,39.09 704.60,38.40 706.94,37.71 705.77,35.57 707.91,36.74" fill="#f7a21b"/><path d="M722 40L725.6 36.2V47.6L722 51Z" fill="#e2e2e2" stroke="#888" stroke-width="0.5"/><path d="M725.6 36.2L728 35.2V46.8L725.6 47.6Z" fill="#9c9c9c"/><path d="M730.4 39.6L733.6 35.6L736.6 39V50.6L733.4 47Z" fill="#e2e2e2" stroke="#888" stroke-width="0.5"/><path d="M730.4 39.6V46.6L733.4 47L733.6 43Z" fill="#9c9c9c"/><path d="M727.4 42.8Q729.4 40.6 731 38.6" stroke="#3fa9e8" stroke-width="1.3" fill="none"/><path d="M765.4 38L768.6 33.8H771V47.2L768 51.4H765.4Z" fill="#e2e2e2" stroke="#999" stroke-width="0.4"/><path d="M768 38L771 33.8V47.2L768 51.4Z" fill="#9c9c9c"/><path d="M771.6 38L775.6 33.4V45.8L771.6 50.6Z" fill="#1fb56a"/><path d="M778.4 39L782.6 34.2V46.4L778.4 51.2Z" fill="#f09060"/><path d="M818.6 38.4V44.6M834.2 38.4V44.6M818.6 40.6H834.2" stroke="#555" stroke-width="0.6"/><path d="M818.6 40.6L820.6 39.6V41.6ZM834.2 40.6L832.2 39.6V41.6Z" fill="#555"/><rect x="818.2" y="43.6" width="16.4" height="3.4" fill="#f7a21b"/><path d="M820 43.6V45M822 43.6V45M824 43.6V45.4M826 43.6V45M828 43.6V45M830 43.6V45.4M832 43.6V45" stroke="#a86a00" stroke-width="0.4"/><rect x="861.6" y="34.2" width="17" height="16.6" fill="#4fb6f0"/><path d="M861.6 50.8V45L866.6 40.6L870.6 45L873.4 42.6L878.6 47V50.8Z" fill="#1676b8"/><circle cx="873.6" cy="38.6" r="1.7" fill="#fdf3c0"/><rect x="901.6" y="31.6" width="22" height="22.4" fill="#1b90da"/><rect x="903.6" y="33.8" width="13.6" height="11.6" fill="none" stroke="#35c06a" stroke-width="0.8" stroke-dasharray="1.6 1.2"/><path d="M915.6 42V51.6L917.8 49.6L919.4 53L920.8 52.4L919.2 49L922 48.8Z" fill="#fff"/></svg>
<div class="a" style="left:231.5px;top:69.5px;width:170px;height:13px;background:#f1f1f1;border:1px solid #e0e0e0;"></div>
<svg class="a" style="left:234px;top:73.5px" width="6" height="5" viewBox="0 0 6 5"><path d="M2.6 0.4L0.2 2.4L2.6 4.4ZM5.4 0.4L3 2.4L5.4 4.4Z" fill="#333"/></svg>
<span class="t " style="left:245.00px;top:72px;font-size:6.2px;line-height:7px;height:7px;color:#4c4c4c;letter-spacing:-0.505px;">BROWSER</span>
<svg class="a" style="left:390px;top:73.6px" width="6" height="6" viewBox="0 0 6 6"><circle cx="2.6" cy="2.6" r="2.2" fill="#2a2a2a"/><path d="M1.4 2.6H3.8" stroke="#aaa" stroke-width="0.6"/></svg>
<div class="a" style="left:399.2px;top:71.6px;width:0.8px;height:8.6px;background:#888;"></div>
<div class="a" style="left:251.5px;top:87px;width:103.5px;height:10px;background:#efefef;border-radius:1.5px;"></div>
<svg class="a" style="left:241px;top:89.4px" width="6" height="6" viewBox="0 0 6 6"><path d="M4.8 0.6V4.8H0.6Z" fill="#333"/></svg>
<svg class="a" style="left:253px;top:88.8px" width="10" height="7" viewBox="0 0 10 7"><path d="M0.4 3.2Q4.6 -1.6 8.8 3.2Q4.6 8 0.4 3.2Z" fill="none" stroke="#8a8a8a" stroke-width="0.9"/><circle cx="4.6" cy="3.2" r="1.7" fill="#8a8a8a"/></svg>
<div class="a" style="left:266px;top:87.5px;width:76px;height:9px;background:#8b8b8b;"></div>
<svg class="a" style="left:269px;top:88.2px" width="7" height="8" viewBox="0 0 7 8"><path d="M1.4 0.4H6.4V6L5 7.4H0.4V1.6Z" fill="#dfe6ee" stroke="#eee" stroke-width="0.3"/><path d="M5 1.6V7.4L6.4 6V0.4Z" fill="#b4c2d2"/></svg>
<span class="t " style="left:284.50px;top:88px;font-size:6.7px;line-height:7px;height:7px;color:#fff;letter-spacing:0.123px;-webkit-text-stroke:0.25px #fff;">Side 2 : Done v4</span>
<svg class="a" style="left:344px;top:87.6px" width="9" height="9" viewBox="0 0 9 9"><circle cx="4.5" cy="4.5" r="3.6" fill="#fff" stroke="#555" stroke-width="0.7"/><circle cx="4.5" cy="4.5" r="1.8" fill="#444"/></svg>
<div class="a" style="left:262px;top:100.5px;width:80.5px;height:10.8px;background:#f0f0f0;border-radius:1.5px;"></div>
<svg class="a" style="left:252px;top:102.6px" width="5" height="7" viewBox="0 0 5 7"><path d="M0.5 0.5L4 3.3L0.5 6.1Z" fill="#fff" stroke="#555" stroke-width="0.6"/></svg>
<svg class="a" style="left:262.6px;top:100.7px" width="10.4" height="10.4" viewBox="0 0 10.4 10.4"><g transform="translate(5.2,5.2)" fill="#8c8c8c"><rect x="-1.03" y="-4.70" width="2.07" height="2.35" transform="rotate(0.0)"/><rect x="-1.03" y="-4.70" width="2.07" height="2.35" transform="rotate(45.0)"/><rect x="-1.03" y="-4.70" width="2.07" height="2.35" transform="rotate(90.0)"/><rect x="-1.03" y="-4.70" width="2.07" height="2.35" transform="rotate(135.0)"/><rect x="-1.03" y="-4.70" width="2.07" height="2.35" transform="rotate(180.0)"/><rect x="-1.03" y="-4.70" width="2.07" height="2.35" transform="rotate(225.0)"/><rect x="-1.03" y="-4.70" width="2.07" height="2.35" transform="rotate(270.0)"/><rect x="-1.03" y="-4.70" width="2.07" height="2.35" transform="rotate(315.0)"/><circle r="3.48"/><circle r="1.69" fill="#f0f0f0"/></g></svg>
<span class="t " style="left:281.00px;top:102px;font-size:6.5px;line-height:7px;height:7px;color:#333;letter-spacing:0.122px;">Document Settings</span>
<div class="a" style="left:262px;top:114.1px;width:64px;height:10.8px;background:#f0f0f0;border-radius:1.5px;"></div>
<svg class="a" style="left:252px;top:116.2px" width="5" height="7" viewBox="0 0 5 7"><path d="M0.5 0.5L4 3.3L0.5 6.1Z" fill="#fff" stroke="#555" stroke-width="0.6"/></svg>
<svg class="a" style="left:263px;top:115.3px" width="10" height="8" viewBox="0 0 10 8"><path d="M0.3 0.8H3.6L4.4 1.8H9.3V7.8H0.3Z" fill="#8c8c8c"/><path d="M0.3 2.6H9.3" stroke="#a8a8a8" stroke-width="0.4"/></svg>
<span class="t " style="left:281.00px;top:116px;font-size:6.5px;line-height:7px;height:7px;color:#333;letter-spacing:0.002px;">Named Views</span>
<div class="a" style="left:262px;top:127.7px;width:56px;height:10.8px;background:#f0f0f0;border-radius:1.5px;"></div>
<svg class="a" style="left:252px;top:129.8px" width="5" height="7" viewBox="0 0 5 7"><path d="M0.5 0.5L4 3.3L0.5 6.1Z" fill="#fff" stroke="#555" stroke-width="0.6"/></svg>
<svg class="a" style="left:263px;top:129.8px" width="10" height="7" viewBox="0 0 10 7"><path d="M0.4 3.2Q4.6 -1.6 8.8 3.2Q4.6 8 0.4 3.2Z" fill="none" stroke="#b4b4b4" stroke-width="0.7"/><circle cx="4.6" cy="3.2" r="1.5" fill="none" stroke="#b4b4b4" stroke-width="0.6"/><path d="M1.4 6L7.8 0.4" stroke="#b4b4b4" stroke-width="0.6"/></svg>
<svg class="a" style="left:277.6px;top:128.9px" width="10" height="8" viewBox="0 0 10 8"><path d="M0.3 0.8H3.6L4.4 1.8H9.3V7.8H0.3Z" fill="#8c8c8c"/><path d="M0.3 2.6H9.3" stroke="#a8a8a8" stroke-width="0.4"/></svg>
<span class="t " style="left:294.50px;top:129px;font-size:6.5px;line-height:7px;height:7px;color:#333;letter-spacing:0.193px;">Origin</span>
<div class="a" style="left:262px;top:141.4px;width:57px;height:10.8px;background:#f0f0f0;border-radius:1.5px;"></div>
<svg class="a" style="left:252px;top:143.5px" width="5" height="7" viewBox="0 0 5 7"><path d="M0.5 0.5L4 3.3L0.5 6.1Z" fill="#fff" stroke="#555" stroke-width="0.6"/></svg>
<svg class="a" style="left:263px;top:143.5px" width="10" height="7" viewBox="0 0 10 7"><path d="M0.4 3.2Q4.6 -1.6 8.8 3.2Q4.6 8 0.4 3.2Z" fill="none" stroke="#8a8a8a" stroke-width="0.9"/><circle cx="4.6" cy="3.2" r="1.7" fill="#8a8a8a"/></svg>
<svg class="a" style="left:277.6px;top:142.6px" width="10" height="8" viewBox="0 0 10 8"><path d="M0.3 0.8H3.6L4.4 1.8H9.3V7.8H0.3Z" fill="#8c8c8c"/><path d="M0.3 2.6H9.3" stroke="#a8a8a8" stroke-width="0.4"/></svg>
<span class="t " style="left:294.50px;top:143px;font-size:6.5px;line-height:7px;height:7px;color:#333;letter-spacing:-0.063px;">Bodies</span>
<div class="a" style="left:262px;top:155.1px;width:64px;height:10.8px;background:#f0f0f0;border-radius:1.5px;"></div>
<svg class="a" style="left:252px;top:157.2px" width="5" height="7" viewBox="0 0 5 7"><path d="M0.5 0.5L4 3.3L0.5 6.1Z" fill="#fff" stroke="#555" stroke-width="0.6"/></svg>
<svg class="a" style="left:263px;top:157.2px" width="10" height="7" viewBox="0 0 10 7"><path d="M0.4 3.2Q4.6 -1.6 8.8 3.2Q4.6 8 0.4 3.2Z" fill="none" stroke="#8a8a8a" stroke-width="0.9"/><circle cx="4.6" cy="3.2" r="1.7" fill="#8a8a8a"/></svg>
<svg class="a" style="left:277.6px;top:156.3px" width="10" height="8" viewBox="0 0 10 8"><path d="M0.3 0.8H3.6L4.4 1.8H9.3V7.8H0.3Z" fill="#8c8c8c"/><path d="M0.3 2.6H9.3" stroke="#a8a8a8" stroke-width="0.4"/></svg>
<span class="t " style="left:294.50px;top:157px;font-size:6.5px;line-height:7px;height:7px;color:#333;letter-spacing:-0.030px;">Sketches</span>
<div class="a" style="left:231px;top:595.5px;width:170.5px;height:12.5px;background:#f1f1f1;border:1px solid #e0e0e0;"></div>
<span class="t " style="left:245.00px;top:598px;font-size:6.2px;line-height:7px;height:7px;color:#4c4c4c;letter-spacing:-0.121px;">COMMENTS</span>
<svg class="a" style="left:390px;top:599.4px" width="6" height="6" viewBox="0 0 6 6"><circle cx="2.6" cy="2.6" r="2.2" fill="#2a2a2a"/><path d="M1.4 2.6H3.8M2.6 1.4V3.8" stroke="#aaa" stroke-width="0.6"/></svg>
<div class="a" style="left:399.2px;top:597.6px;width:0.8px;height:8.6px;background:#888;"></div>
<div class="a" style="left:559.5px;top:594.5px;width:134.3px;height:13px;background:#f0f0f0;"></div>
<svg class="a" style="left:0;top:0" width="1024" height="640" viewBox="0 0 1024 640"><g fill="none" stroke="#666" stroke-width="0.7"><ellipse cx="565.6" cy="601" rx="4.4" ry="2.2"/><ellipse cx="565.6" cy="601" rx="2.2" ry="4.4"/></g><circle cx="565.6" cy="601" r="1.1" fill="#3a8fd8"/><path d="M573 600.4H576L574.5 602.6Z" fill="#333"/><path d="M579.6 598.6H587.6V604.6H579.6Z" fill="#8c8c8c"/><path d="M581 597V599M583.6 597V599M586.2 597V599" stroke="#666" stroke-width="0.8"/><path d="M579 605.4H588.2" stroke="#555" stroke-width="0.8"/><path d="M595.4 601Q594.4 598.8 596 598.6L597 600.4V597.4Q597.8 596.4 598.4 597.4V596.8Q599.2 596 599.8 597V597.4Q600.8 596.8 601.2 597.8V598.6Q602.2 598.2 602.4 599.4V602.6Q602.2 605.6 599.4 605.6Q596.8 605.6 595.4 601Z" fill="#fff" stroke="#555" stroke-width="0.6"/><circle cx="612.6" cy="600" r="3" fill="#fff" stroke="#555" stroke-width="0.8"/><path d="M614.8 602.2L618 605.4" stroke="#444" stroke-width="1.2"/><path d="M616.6 597.4H618.6M616.6 599H618" stroke="#555" stroke-width="0.5"/><rect x="624.6" y="597" width="7.6" height="7" fill="none" stroke="#888" stroke-width="0.5" stroke-dasharray="1 0.8"/><circle cx="628.4" cy="600.4" r="2.8" fill="#fff" stroke="#555" stroke-width="0.8"/><path d="M630.4 602.6L633.6 605.6" stroke="#444" stroke-width="1.2"/><path d="M637 600.4H640L638.5 602.6Z" fill="#333"/><rect x="643.4" y="597" width="8.6" height="6.6" fill="#86b2e0" stroke="#5a86b6" stroke-width="0.5"/><path d="M646.4 603.6V605.2H649V603.6M645 605.4H650.4" stroke="#555" stroke-width="0.7" fill="none"/><path d="M654 600.4H657L655.5 602.6Z" fill="#333"/><rect x="660.6" y="597" width="9" height="8.4" fill="#9a9a9a"/><path d="M660.6 601.6H669.6M660.6 603.6H669.6M663.6 600V605.4M666.6 600V605.4" stroke="#777" stroke-width="0.4"/><rect x="660.6" y="597" width="9" height="3" fill="#b4b4b4"/><path d="M671.4 600.4H674.4L672.9 602.6Z" fill="#333"/><rect x="678.4" y="597.2" width="9" height="8" fill="#4f8fd0" stroke="#3a6ea6" stroke-width="0.5"/><path d="M682.9 597.2V605.2M678.4 601.2H687.4" stroke="#e8f0fa" stroke-width="0.7"/><path d="M689.4 600.4H692.4L690.9 602.6Z" fill="#333"/></svg>
<div class="a" style="left:228px;top:611px;width:796px;height:29px;background:#f0f0f0;border-top:1px solid #cfcfcf;"></div>
<svg class="a" style="left:0;top:0" width="1024" height="640" viewBox="0 0 1024 640"><path d="M235.4 622.4V631.2" stroke="#2e2e2e" stroke-width="1.2"/><path d="M242.4 622.4V631.2L236.4 626.8Z" fill="#2e2e2e"/><path d="M254 622.6V631L249 626.8Z" fill="#2e2e2e"/><path d="M255.2 624.6H256.8V629H255.2Z" fill="#2e2e2e"/><path d="M263.4 622V631.6L270.2 626.8Z" fill="#2e2e2e"/><path d="M279.6 622.6V631L284.6 626.8Z" fill="#2e2e2e"/><path d="M276.8 624.6H278.4V629H276.8Z" fill="#2e2e2e"/><path d="M291.4 622.4V631.2L297.4 626.8Z" fill="#2e2e2e"/><path d="M298.4 622.4V631.2" stroke="#2e2e2e" stroke-width="1.2"/><g transform="translate(312.60,621.6)"><rect x="0.8" y="0.8" width="7.8" height="7.8" fill="#fdfdfd" stroke="#777" stroke-width="0.5"/><path d="M2.8 2.8H6.6Q6.4 6.2 2.8 6.6Z" fill="none" stroke="#5a8fc8" stroke-width="0.5"/><g fill="#4f96d8"><rect x="0" y="0" width="1.5" height="1.5"/><rect x="7.8" y="0" width="1.5" height="1.5"/><rect x="0" y="7.8" width="1.5" height="1.5"/></g><path d="M5.4 8.2L9.4 4.6L10.4 5.8L6.6 9.4Z" fill="#f0a030"/><path d="M5.4 8.2L6.6 9.4L4.8 9.8Z" fill="#c03030"/></g><g transform="translate(326.32,621.6)"><path d="M0.6 8.4L2 7.2H9.6L8.2 9.6H0.6Z" fill="#c4c4c4"/><path d="M0.8 2L2.6 0.4H9.2L7.4 2Z" fill="#8ccaf2"/><path d="M0.8 2H7.4V8.4H0.8Z" fill="#3fa6e6"/><path d="M7.4 2L9.2 0.4V6.8L7.4 8.4Z" fill="#1f82c8"/></g><g transform="translate(340.04,621.6)"><rect x="0.8" y="0.8" width="7.8" height="7.8" fill="#fdfdfd" stroke="#777" stroke-width="0.5"/><path d="M2.8 2.8H6.6Q6.4 6.2 2.8 6.6Z" fill="none" stroke="#5a8fc8" stroke-width="0.5"/><g fill="#4f96d8"><rect x="0" y="0" width="1.5" height="1.5"/><rect x="7.8" y="0" width="1.5" height="1.5"/><rect x="0" y="7.8" width="1.5" height="1.5"/></g><path d="M5.4 8.2L9.4 4.6L10.4 5.8L6.6 9.4Z" fill="#f0a030"/><path d="M5.4 8.2L6.6 9.4L4.8 9.8Z" fill="#c03030"/></g><g transform="translate(353.76,621.6)"><path d="M0.6 8.4L2 7.2H9.6L8.2 9.6H0.6Z" fill="#c4c4c4"/><path d="M0.8 2L2.6 0.4H9.2L7.4 2Z" fill="#8ccaf2"/><path d="M0.8 2H7.4V8.4H0.8Z" fill="#3fa6e6"/><path d="M7.4 2L9.2 0.4V6.8L7.4 8.4Z" fill="#1f82c8"/></g><g transform="translate(367.48,621.6)"><rect x="0.8" y="0.8" width="7.8" height="7.8" fill="#fdfdfd" stroke="#777" stroke-width="0.5"/><path d="M2.8 2.8H6.6Q6.4 6.2 2.8 6.6Z" fill="none" stroke="#5a8fc8" stroke-width="0.5"/><g fill="#4f96d8"><rect x="0" y="0" width="1.5" height="1.5"/><rect x="7.8" y="0" width="1.5" height="1.5"/><rect x="0" y="7.8" width="1.5" height="1.5"/></g><path d="M5.4 8.2L9.4 4.6L10.4 5.8L6.6 9.4Z" fill="#f0a030"/><path d="M5.4 8.2L6.6 9.4L4.8 9.8Z" fill="#c03030"/></g><g transform="translate(381.20,621.6)"><path d="M0.6 8.4L2 7.2H9.6L8.2 9.6H0.6Z" fill="#c4c4c4"/><path d="M0.8 2L2.6 0.4H9.2L7.4 2Z" fill="#8ccaf2"/><path d="M0.8 2H7.4V8.4H0.8Z" fill="#3fa6e6"/><path d="M7.4 2L9.2 0.4V6.8L7.4 8.4Z" fill="#1f82c8"/></g><g transform="translate(394.92,621.6)"><rect x="0.8" y="0.8" width="7.8" height="7.8" fill="#fdfdfd" stroke="#777" stroke-width="0.5"/><path d="M2.8 2.8H6.6Q6.4 6.2 2.8 6.6Z" fill="none" stroke="#5a8fc8" stroke-width="0.5"/><g fill="#4f96d8"><rect x="0" y="0" width="1.5" height="1.5"/><rect x="7.8" y="0" width="1.5" height="1.5"/><rect x="0" y="7.8" width="1.5" height="1.5"/></g><path d="M5.4 8.2L9.4 4.6L10.4 5.8L6.6 9.4Z" fill="#f0a030"/><path d="M5.4 8.2L6.6 9.4L4.8 9.8Z" fill="#c03030"/></g><g transform="translate(408.64,621.6)"><path d="M0.6 8.4L2 7.2H9.6L8.2 9.6H0.6Z" fill="#c4c4c4"/><path d="M0.8 2L2.6 0.4H9.2L7.4 2Z" fill="#8ccaf2"/><path d="M0.8 2H7.4V8.4H0.8Z" fill="#3fa6e6"/><path d="M7.4 2L9.2 0.4V6.8L7.4 8.4Z" fill="#1f82c8"/></g><g transform="translate(422.36,621.6)"><rect x="0.8" y="0.8" width="7.8" height="7.8" fill="#fdfdfd" stroke="#777" stroke-width="0.5"/><path d="M2.8 2.8H6.6Q6.4 6.2 2.8 6.6Z" fill="none" stroke="#5a8fc8" stroke-width="0.5"/><g fill="#4f96d8"><rect x="0" y="0" width="1.5" height="1.5"/><rect x="7.8" y="0" width="1.5" height="1.5"/><rect x="0" y="7.8" width="1.5" height="1.5"/></g><path d="M5.4 8.2L9.4 4.6L10.4 5.8L6.6 9.4Z" fill="#f0a030"/><path d="M5.4 8.2L6.6 9.4L4.8 9.8Z" fill="#c03030"/></g><g transform="translate(436.08,621.6)"><path d="M0.6 8.4L2 7.2H9.6L8.2 9.6H0.6Z" fill="#c4c4c4"/><path d="M0.8 2L2.6 0.4H9.2L7.4 2Z" fill="#8ccaf2"/><path d="M0.8 2H7.4V8.4H0.8Z" fill="#3fa6e6"/><path d="M7.4 2L9.2 0.4V6.8L7.4 8.4Z" fill="#1f82c8"/></g><path d="M317.4 632V634.4H440.4V632" stroke="#9a9a9a" stroke-width="0.6" fill="none"/><path d="M331.1 632.4V634.4" stroke="#9a9a9a" stroke-width="0.6"/><path d="M344.8 632.4V634.4" stroke="#9a9a9a" stroke-width="0.6"/><path d="M358.6 632.4V634.4" stroke="#9a9a9a" stroke-width="0.6"/><path d="M372.3 632.4V634.4" stroke="#9a9a9a" stroke-width="0.6"/><path d="M386.0 632.4V634.4" stroke="#9a9a9a" stroke-width="0.6"/><path d="M399.7 632.4V634.4" stroke="#9a9a9a" stroke-width="0.6"/><path d="M413.4 632.4V634.4" stroke="#9a9a9a" stroke-width="0.6"/><path d="M427.2 632.4V634.4" stroke="#9a9a9a" stroke-width="0.6"/><path d="M443.4 618.6H449.6V621L447.4 623.4V636H445.8V623.4L443.4 621Z" fill="#3c3c3c"/></svg>
<svg class="a" style="left:0;top:0;font-family:'Liberation Sans',sans-serif" width="1024" height="640" viewBox="0 0 1024 640"><ellipse cx="990" cy="124" rx="17" ry="8" fill="#000" opacity="0.06"/><polygon points="967.9,91.5 988.3,82.6 1007.3,91.5 987.6,102.7" fill="#ececec" fill-opacity="0.88" stroke="#9a9a9a" stroke-width="0.4"/><polygon points="967.9,91.5 987.6,102.7 987.6,126 970,114" fill="#dedede" fill-opacity="0.88" stroke="#9a9a9a" stroke-width="0.4"/><polygon points="987.6,102.7 1007.3,91.5 1005.9,112.6 987.6,126" fill="#d0d0d0" fill-opacity="0.85" stroke="#9a9a9a" stroke-width="0.4"/><path d="M967.6 86.6L970 114" stroke="#6a6af0" stroke-width="0.9"/><path d="M970 114L990.4 128.6" stroke="#f07878" stroke-width="0.9"/><text transform="matrix(0.87,0.5,-0.87,0.5,983.6,90.4)" font-size="4.2" fill="#9a9a9a">TOP</text><text transform="matrix(0.84,0.5,0,1,971.4,105.4)" font-size="5" fill="#9a9a9a">FRONT</text><text transform="matrix(0.84,-0.56,0,1,990.4,114.6)" font-size="5" fill="#9a9a9a">RIGHT</text><text x="963.4" y="85.6" font-size="6.4" fill="#7070ee" font-weight="bold">Z</text><text x="991.8" y="134" font-size="6.4" fill="#ee7070" font-weight="bold">X</text></svg>
<svg class="a" style="left:0;top:0" width="1024" height="640" viewBox="0 0 1024 640"><rect x="911.2" y="565.5" width="104.6" height="66.4" rx="2.5" fill="#fff" stroke="#000" stroke-width="2.2"/><g transform="translate(912.3,566.6) scale(0.1002)"><rect x="0" y="0" width="227" height="640" fill="#e6e6e6"/><rect x="0" y="0" width="1024" height="18" fill="#cbcbcb"/><rect x="228" y="18" width="796" height="47" fill="#f0f0f0"/><rect x="228" y="612" width="796" height="28" fill="#f0f0f0"/><rect x="10" y="87.0" width="198" height="38.6" fill="#fff"/><rect x="14" y="95.0" width="30" height="24" rx="6" fill="#6a675f"/><circle cx="56.7" cy="118.5" r="5.5" fill="#2a5ab8"/><rect x="10" y="132.7" width="198" height="38.6" fill="#fff"/><rect x="14" y="140.7" width="30" height="24" rx="6" fill="#6a675f"/><circle cx="56.7" cy="164.2" r="5.5" fill="#2a5ab8"/><rect x="10" y="178.4" width="198" height="38.6" fill="#fff"/><rect x="14" y="186.4" width="30" height="24" rx="6" fill="#6a675f"/><circle cx="56.7" cy="209.9" r="5.5" fill="#2a5ab8"/><rect x="10" y="224.2" width="198" height="38.6" fill="#fff"/><rect x="14" y="232.2" width="30" height="24" rx="6" fill="#6a675f"/><circle cx="56.7" cy="255.7" r="5.5" fill="#2a5ab8"/><rect x="10" y="269.9" width="198" height="38.6" fill="#fff"/><rect x="14" y="277.9" width="30" height="24" rx="6" fill="#6a675f"/><circle cx="56.7" cy="301.4" r="5.5" fill="#2a5ab8"/><rect x="10" y="315.6" width="198" height="38.6" fill="#fff"/><rect x="14" y="323.6" width="30" height="24" rx="6" fill="#6a675f"/><rect x="10" y="361.3" width="198" height="38.6" fill="#fff"/><rect x="14" y="369.3" width="30" height="24" rx="6" fill="#6a675f"/><rect x="105" y="47" width="35" height="15" fill="#6a9bd0"/><rect x="310" y="34" width="17" height="17" fill="#3fa9e8"/><rect x="334" y="34" width="17" height="17" fill="#3fa9e8"/><rect x="358" y="34" width="17" height="17" fill="#3fa9e8"/><rect x="382" y="34" width="17" height="17" fill="#bbb"/><rect x="406" y="34" width="17" height="17" fill="#3fa9e8"/><rect x="430" y="34" width="17" height="17" fill="#b07ee8"/><rect x="474" y="34" width="17" height="17" fill="#3fa9e8"/><rect x="518" y="34" width="17" height="17" fill="#3fa9e8"/><rect x="542" y="34" width="17" height="17" fill="#bbb"/><rect x="568" y="34" width="17" height="17" fill="#3fa9e8"/><rect x="592" y="34" width="17" height="17" fill="#3fa9e8"/><rect x="616" y="34" width="17" height="17" fill="#3fa9e8"/><rect x="642" y="34" width="17" height="17" fill="#555"/><rect x="666" y="34" width="17" height="17" fill="#3fa9e8"/><rect x="696" y="34" width="17" height="17" fill="#3fa9e8"/><rect x="722" y="34" width="17" height="17" fill="#bbb"/><rect x="766" y="34" width="17" height="17" fill="#1fb56a"/><rect x="818" y="34" width="17" height="17" fill="#f7a21b"/><rect x="862" y="34" width="17" height="17" fill="#4fb6f0"/><rect x="901" y="31" width="23" height="23" fill="#1b90da"/><use href="#model"/><polygon points="600,385 675,345 675,405 600,440" fill="#55514b"/><path d="M228 109L495 263M757 413L1024 569" stroke="#f2a0a0" stroke-width="3"/><polygon points="967.9,91.5 988.3,82.6 1007.3,91.5 1005.9,112.6 987.6,126 970,114" fill="#dcdcdc"/><rect x="910" y="566" width="106" height="66" fill="#fff" stroke="#000" stroke-width="12"/></g></svg>
</div></body></html>
